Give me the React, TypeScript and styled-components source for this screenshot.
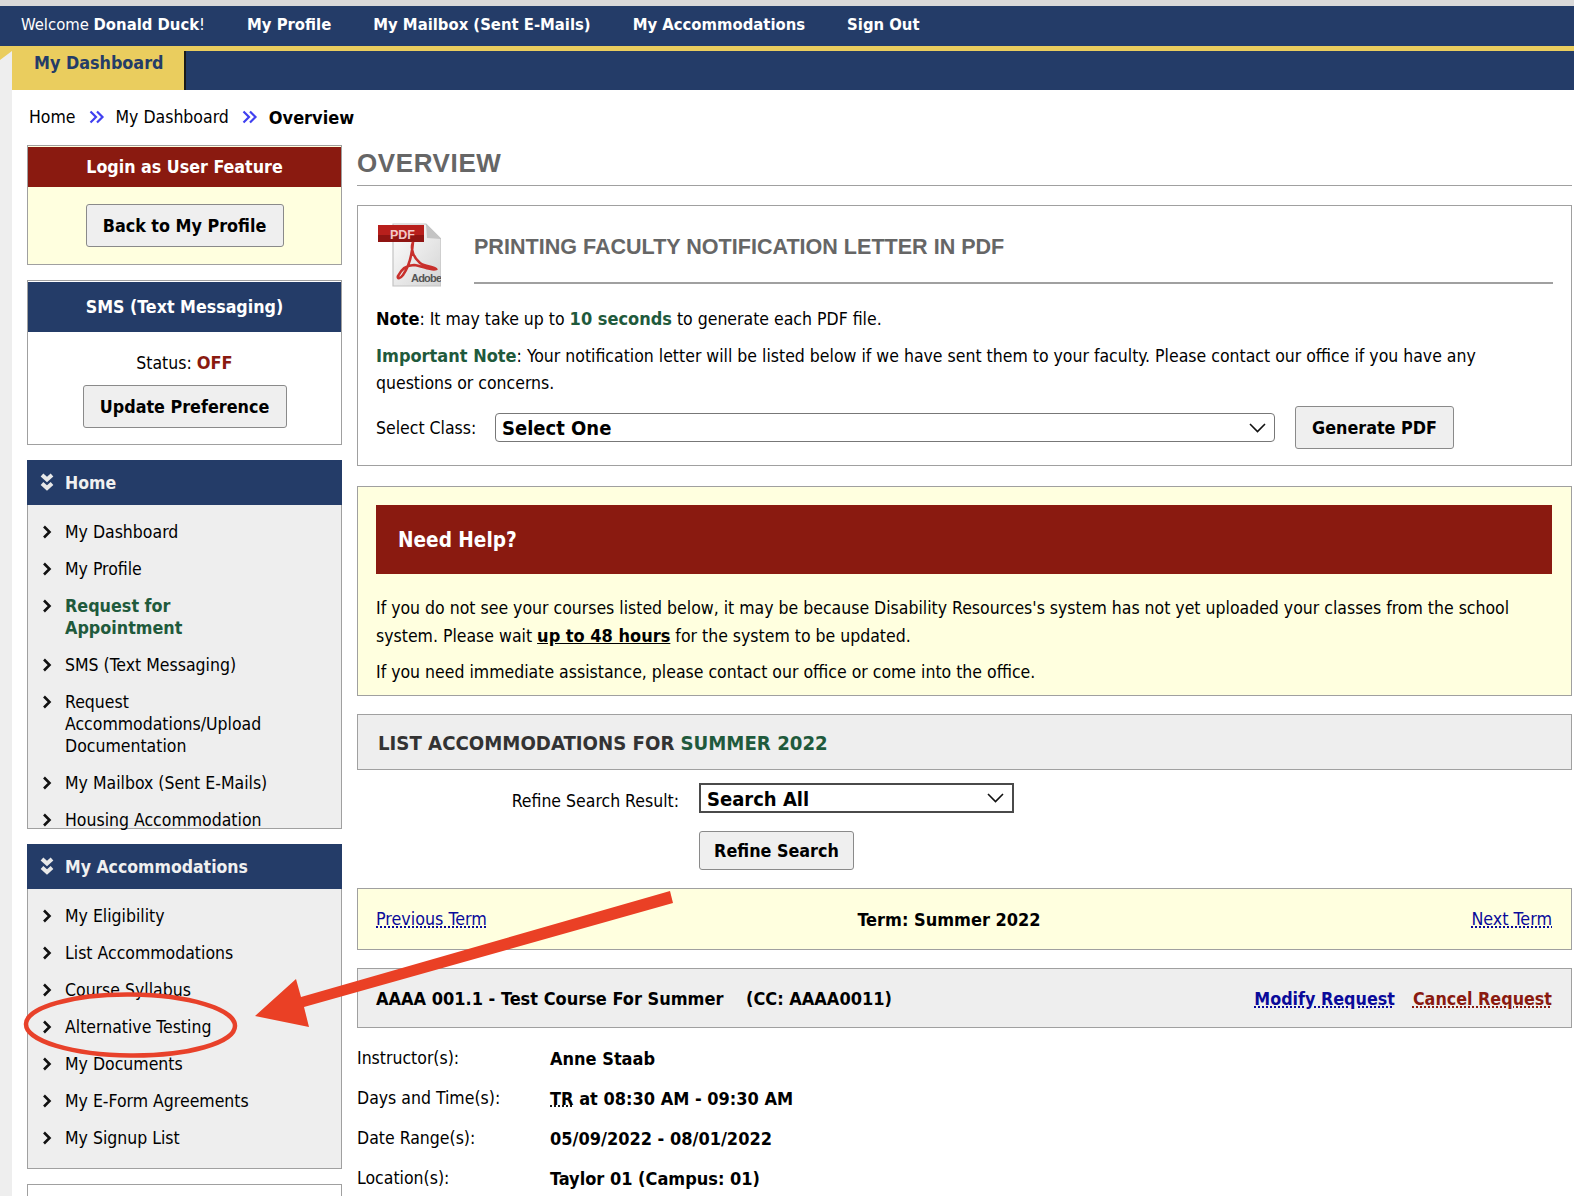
import React from "react";
import styled, { createGlobalStyle } from "styled-components";

const Global = createGlobalStyle`
  html, body { margin: 0; padding: 0; background: #fff; }
  body { font-family: "DejaVu Sans Condensed", "DejaVu Sans", sans-serif; font-stretch: condensed; font-size: 17.5px; color: #000; }
  * { box-sizing: border-box; }
  b { font-size: 18px; }
`;

const Page = styled.div`
  position: relative;
  width: 1574px;
  height: 1196px;
  overflow: hidden;
  border-top: 6px solid #d9d9d9;
`;
const TopNav = styled.nav`
  height: 40px;
  background: #243c68;
  display: flex;
  align-items: center;
  padding: 0 0 3px 21px;
  gap: 42px;
  color: #fff;
  font-size: 16.5px;
  white-space: nowrap;
  b { font-size: 16.5px; }
`;
const NavItem = styled.span`font-weight: bold;`;
const Welcome = styled.span``;
const SubNav = styled.div`
  height: 44px;
  border-top: 5px solid #eacd5e;
  background: #243c68;
  display: flex;
  position: relative;
`;
const Corner = styled.div`
  width: 12px;
  background: #eeeeee;
  position: relative;
  &::before {
    content: "";
    position: absolute;
    left: 0;
    top: 0;
    border-top: 9px solid #eacd5e;
    border-right: 12px solid transparent;
  }
`;
const Tab = styled.div`
  width: 174px;
  background: #eacd5e;
  border-right: 2px solid #1a1a1a;
  color: #243c68;
  font-weight: bold;
  font-size: 17.8px;
  padding: 1px 0 0 22px;
  line-height: 22px;
`;
const Body = styled.div`
  border-left: 12px solid #eeeeee;
  padding-left: 15px;
  height: 1106px;
`;
const Crumbs = styled.div`
  height: 55px;
  display: flex;
  align-items: center;
  padding: 0 0 1px 2px;
`;
const CrumbText = styled.span<{ $strong?: boolean }>`
  font-weight: ${(p) => (p.$strong ? "bold" : "normal")};
  font-size: ${(p) => (p.$strong ? "18px" : "17.5px")};
`;
const CrumbSep = styled.svg`
  width: 16px;
  height: 14px;
  margin: 0 11px 0 13px;
`;
const Columns = styled.div`
  display: flex;
  gap: 15px;
  align-items: flex-start;
`;
const Side = styled.aside`
  width: 315px;
  display: flex;
  flex-direction: column;
  gap: 15px;
  flex: none;
`;
const Main = styled.main`
  width: 1215px;
  flex: none;
`;
const SideBox = styled.section<{ $bg?: string; $h?: number }>`
  border: 1px solid #a0a0a0;
  background: ${(p) => p.$bg || "#fff"};
  ${(p) => (p.$h ? `height: ${p.$h}px;` : "")}
  text-align: center;
`;
const SideHead = styled.div<{ $bg: string; $h: number }>`
  margin: 1px 0 0;
  height: ${(p) => p.$h}px;
  background: ${(p) => p.$bg};
  color: #fff;
  font-weight: bold;
  font-size: 17.7px;
  display: flex;
  align-items: center;
  justify-content: center;
`;
const Btn = styled.div`
  display: inline-flex;
  align-items: center;
  justify-content: center;
  border: 1px solid #8a8a8a;
  border-radius: 3px;
  background: #efefef;
  font-weight: bold;
  font-size: 17.8px;
`;
const BackBtn = styled(Btn)`
  width: 198px;
  height: 43px;
  margin-top: 17px;
`;
const UpdateBtn = styled(Btn)`
  width: 204px;
  height: 43px;
  margin-top: 11px;
`;
const Status = styled.div`
  margin-top: 20px;
  line-height: 22px;
  b { color: #8a1a10; }
`;
const MenuBox = styled.section<{ $h: number }>`
  height: ${(p) => p.$h}px;
  background: #eeeeee;
  border: 1px solid #a0a0a0;
  border-top: none;
`;
const MenuHead = styled.div`
  height: 45px;
  margin: 0 -1px;
  background: #243c68;
  color: #f0f0f0;
  font-weight: bold;
  display: flex;
  align-items: center;
  padding-left: 13px;
  gap: 11px;
`;
const MenuList = styled.ul`
  list-style: none;
  margin: 0;
  padding: 16px 0 0;
`;
const MenuItem = styled.li<{ $green?: boolean }>`
  display: flex;
  align-items: flex-start;
  padding: 0 60px 0 14px;
  gap: 13px;
  margin-bottom: 15px;
  line-height: 22px;
  color: ${(p) => (p.$green ? "#1f5a3c" : "#000")};
  font-weight: ${(p) => (p.$green ? "bold" : "normal")};
  font-size: ${(p) => (p.$green ? "17.8px" : "17.5px")};
  white-space: nowrap;
`;
const ItemText = styled.span`white-space: pre-line;`;
const Chev = styled.svg`
  width: 10px;
  height: 14px;
  margin-top: 4px;
  flex: none;
`;
const Title = styled.h1`
  margin: 0 0 19px;
  height: 41px;
  padding-left: 0;
  font: bold 26px/36px "Liberation Sans", Arial, sans-serif;
  letter-spacing: 0.6px;
  color: #666;
  border-bottom: 1px solid #a0a0a0;
  text-transform: uppercase;
`;
const Panel = styled.section`
  height: 261px;
  border: 1px solid #a0a0a0;
  padding: 16px 18px 0 18px;
  margin-bottom: 20px;
`;
const PdfHead = styled.div`
  display: flex;
  gap: 33px;
  height: 67px;
  margin-bottom: 16px;
`;
const PdfIcon = styled.svg`
  width: 65px;
  height: 67px;
  flex: none;
`;
const PdfTitle = styled.h2`
  flex: 1;
  margin: 0;
  height: 62px;
  padding-top: 12px;
  font: bold 21.55px/26px "Liberation Sans", Arial, sans-serif;
  color: #666;
  border-bottom: 2px solid #a0a0a0;
`;
const Para = styled.p`
  margin: 0 0 9px;
  line-height: 27px;
  b { font-weight: bold; }
`;
const Green = styled.b`color: #1f5a3c;`;
const SelectRow = styled.div`
  display: flex;
  align-items: center;
`;
const SelectLabel = styled.span`width: 119px; flex: none;`;
const SelectWrap = styled.div<{ $w: number; $thick?: boolean }>`
  position: relative;
  width: ${(p) => p.$w}px;
  height: ${(p) => (p.$thick ? 30 : 29)}px;
  border: ${(p) => (p.$thick ? "2px solid #4a4a4a" : "1px solid #777")};
  border-radius: ${(p) => (p.$thick ? 0 : 4)}px;
  display: flex;
  align-items: center;
  padding: 1px 0 0 6px;
  font-size: 20px;
  font-weight: bold;
`;
const SelectArrow = styled.svg`
  position: absolute;
  right: 8px;
  top: 50%;
  margin-top: -5px;
  width: 17px;
  height: 10px;
`;
const GenBtn = styled(Btn)`
  width: 159px;
  height: 43px;
  margin-left: 20px;
`;
const Help = styled.section`
  height: 210px;
  background: #ffffdf;
  border: 1px solid #a0a0a0;
  padding: 18px 19px 0 18px;
  margin-bottom: 18px;
`;
const HelpHead = styled.div`
  height: 69px;
  background: #8a1a10;
  color: #fff;
  font-weight: bold;
  font-size: 20.6px;
  display: flex;
  align-items: center;
  padding-left: 22px;
  margin-bottom: 21px;
`;
const HelpPara = styled.p`
  margin: 0 0 9px;
  line-height: 27px;
  b { text-decoration: underline; }
`;
const ListHead = styled.section`
  height: 56px;
  background: #eeeeee;
  border: 1px solid #a0a0a0;
  display: flex;
  align-items: center;
  padding: 1px 0 0 20px;
  font-size: 20.2px;
  font-weight: bold;
  color: #333;
  span { color: #1f5a3c; margin-left: 6px; }
`;
const Refine = styled.div`
  height: 118px;
  display: grid;
  grid-template-columns: 322px 1fr;
  column-gap: 20px;
  padding-top: 13px;
  align-content: start;
  row-gap: 15px;
`;
const RefineLabel = styled.span`
  text-align: right;
  line-height: 30px;
  padding-top: 3px;
`;
const RefineBtn = styled(Btn)`
  grid-column: 2;
  width: 155px;
  height: 39px;
`;
const TermBar = styled.section`
  height: 62px;
  background: #ffffdf;
  border: 1px solid #a0a0a0;
  display: grid;
  grid-template-columns: 1fr auto 1fr;
  align-items: center;
  padding: 0 19px 0 18px;
  margin-bottom: 18px;
  b { font-weight: bold; margin-right: 30px; }
`;
const DotLink = styled.a<{ $color: string; $bold?: boolean; $right?: boolean }>`
  color: ${(p) => p.$color};
  font-weight: ${(p) => (p.$bold ? "bold" : "normal")};
  font-size: 17.75px;
  text-decoration: underline dotted;
  text-underline-offset: 2px;
  ${(p) => (p.$right ? "justify-self: end;" : "")}
`;
const CourseBar = styled.section`
  height: 60px;
  background: #eeeeee;
  border: 1px solid #a0a0a0;
  display: flex;
  align-items: center;
  padding: 1px 19px 0 18px;
  font-weight: bold;
  font-size: 18px;
  margin-bottom: 10px;
`;
const CourseName = styled.span`
  white-space: pre;
  flex: 1;
`;
const CourseLinks = styled.span`
  display: flex;
  gap: 18px;
`;
const Detail = styled.div`
  display: grid;
  grid-template-columns: 193px 1fr;
  grid-auto-rows: 40px;
  align-items: center;
`;
const DetailValue = styled.span`
  font-weight: bold;
  font-size: 18px;
  abbr { text-decoration: underline dotted; }
`;
const Overlay = styled.svg`
  position: absolute;
  left: 0;
  top: -6px;
  width: 1574px;
  height: 1196px;
  pointer-events: none;
`;

const ChevRight = () => (
  <Chev viewBox="0 0 10 14">
    <path d="M2 1.5 L7.5 7 L2 12.5" fill="none" stroke="#111" strokeWidth="2.6" />
  </Chev>
);
const DoubleDown = () => (
  <svg width="14" height="19" viewBox="0 0 14 19">
    <path d="M2 2 L7 6.5 L12 2 M2 10.5 L7 15 L12 10.5" fill="none" stroke="#e8e8e8" strokeWidth="4" />
  </svg>
);
const Sep = () => (
  <CrumbSep viewBox="0 0 16 14">
    <path d="M1.5 1.5 L7 7 L1.5 12.5 M8 1.5 L13.5 7 L8 12.5" fill="none" stroke="#4040f0" strokeWidth="2.2" />
  </CrumbSep>
);
const Arrow = () => (
  <SelectArrow viewBox="0 0 17 10">
    <path d="M1 1 L8.5 8.5 L16 1" fill="none" stroke="#111" strokeWidth="1.6" />
  </SelectArrow>
);

const home = ["My Dashboard", "My Profile", "Request for Appointment", "SMS (Text Messaging)", "Request\nAccommodations/Upload\nDocumentation", "My Mailbox (Sent E-Mails)", "Housing Accommodation"];
const accom = ["My Eligibility", "List Accommodations", "Course Syllabus", "Alternative Testing", "My Documents", "My E-Form Agreements", "My Signup List"];

export default function App() {
  return (
    <Page>
      <Global />
      <TopNav>
        <Welcome>Welcome <b>Donald Duck</b>!</Welcome>
        <NavItem>My Profile</NavItem>
        <NavItem>My Mailbox (Sent E-Mails)</NavItem>
        <NavItem>My Accommodations</NavItem>
        <NavItem>Sign Out</NavItem>
      </TopNav>
      <SubNav>
        <Corner />
        <Tab>My Dashboard</Tab>
      </SubNav>
      <Body>
        <Crumbs>
          <CrumbText>Home</CrumbText>
          <Sep />
          <CrumbText>My Dashboard</CrumbText>
          <Sep />
          <CrumbText $strong>Overview</CrumbText>
        </Crumbs>
        <Columns>
          <Side>
            <SideBox $bg="#ffffdf" $h={120}>
              <SideHead $bg="#8a1a10" $h={40}>Login as User Feature</SideHead>
              <BackBtn>Back to My Profile</BackBtn>
            </SideBox>
            <SideBox $h={165}>
              <SideHead $bg="#243c68" $h={50}>SMS (Text Messaging)</SideHead>
              <Status>Status: <b>OFF</b></Status>
              <UpdateBtn>Update Preference</UpdateBtn>
            </SideBox>
            <MenuBox $h={369}>
              <MenuHead><DoubleDown />Home</MenuHead>
              <MenuList>
                {home.map((t) => (
                  <MenuItem key={t} $green={t.startsWith("Request for")}>
                    <ChevRight />
                    <ItemText>{t}</ItemText>
                  </MenuItem>
                ))}
              </MenuList>
            </MenuBox>
            <MenuBox $h={325}>
              <MenuHead><DoubleDown />My Accommodations</MenuHead>
              <MenuList>
                {accom.map((t) => (
                  <MenuItem key={t}>
                    <ChevRight />
                    <ItemText>{t}</ItemText>
                  </MenuItem>
                ))}
              </MenuList>
            </MenuBox>
            <SideBox $h={60} />
          </Side>
          <Main>
            <Title>Overview</Title>
            <Panel>
              <PdfHead>
                <PdfIcon viewBox="0 3 65 67">
                  <defs>
                    <linearGradient id="pg" x1="0" y1="0" x2="1" y2="1">
                      <stop offset="0" stopColor="#ffffff" />
                      <stop offset="1" stopColor="#d4d4d4" />
                    </linearGradient>
                  </defs>
                  <path d="M17 5 H50 L65 20 V67 H17 Z" fill="url(#pg)" stroke="#c4c4c4" strokeWidth="1.2" />
                  <path d="M50 5 L51 19 L65 20 Z" fill="#c4c4c4" />
                  <rect x="2" y="6" width="46" height="17" fill="#b81f1c" />
                  <rect x="2" y="16" width="46" height="7" fill="#8f1412" />
                  <text x="14" y="19.5" fontFamily="Liberation Sans" fontWeight="bold" fontSize="12.5" fill="#f2c8c8">PDF</text>
                  <path d="M37 23 C34 31 38 39 44 44 C49 48 58 47 60 50 C56 52 46 47 38 46 C30 46 25 51 22 57 C21 60 24 60 27 56 C32 49 36 36 37 23 Z" fill="none" stroke="#c8302c" strokeWidth="2.6" />
                  <text x="35" y="63" fontFamily="Liberation Sans" fontWeight="bold" fontSize="11" fill="#555" letterSpacing="-0.8">Adobe</text>
                </PdfIcon>
                <PdfTitle>PRINTING FACULTY NOTIFICATION LETTER IN PDF</PdfTitle>
              </PdfHead>
              <Para><b>Note</b>: It may take up to <Green>10 seconds</Green> to generate each PDF file.</Para>
              <Para><Green>Important Note</Green>: Your notification letter will be listed below if we have sent them to your faculty. Please contact our office if you have any questions or concerns.</Para>
              <SelectRow>
                <SelectLabel>Select Class:</SelectLabel>
                <SelectWrap $w={780}>Select One<Arrow /></SelectWrap>
                <GenBtn>Generate PDF</GenBtn>
              </SelectRow>
            </Panel>
            <Help>
              <HelpHead>Need Help?</HelpHead>
              <HelpPara>If you do not see your courses listed below, it may be because Disability Resources's system has not yet uploaded your classes from the school system. Please wait <b>up to 48 hours</b> for the system to be updated.</HelpPara>
              <HelpPara>If you need immediate assistance, please contact our office or come into the office.</HelpPara>
            </Help>
            <ListHead>LIST ACCOMMODATIONS FOR<span>SUMMER 2022</span></ListHead>
            <Refine>
              <RefineLabel>Refine Search Result:</RefineLabel>
              <SelectWrap $w={315} $thick>Search All<Arrow /></SelectWrap>
              <RefineBtn>Refine Search</RefineBtn>
            </Refine>
            <TermBar>
              <DotLink $color="#0a0a9a">Previous Term</DotLink>
              <b>Term: Summer 2022</b>
              <DotLink $color="#0a0a9a" $right>Next Term</DotLink>
            </TermBar>
            <CourseBar>
              <CourseName>{"AAAA 001.1 - Test Course For Summer    (CC: AAAA0011)"}</CourseName>
              <CourseLinks>
                <DotLink $color="#0a0a9a" $bold>Modify Request</DotLink>
                <DotLink $color="#8a1a10" $bold>Cancel Request</DotLink>
              </CourseLinks>
            </CourseBar>
            <Detail>
              <span>Instructor(s):</span><DetailValue>Anne Staab</DetailValue>
              <span>Days and Time(s):</span><DetailValue><abbr>TR</abbr> at 08:30 AM - 09:30 AM</DetailValue>
              <span>Date Range(s):</span><DetailValue>05/09/2022 - 08/01/2022</DetailValue>
              <span>Location(s):</span><DetailValue>Taylor 01 (Campus: 01)</DetailValue>
            </Detail>
          </Main>
        </Columns>
      </Body>
      <Overlay viewBox="0 0 1574 1196">
        <ellipse cx="130.5" cy="1025" rx="104.5" ry="30.5" fill="none" stroke="#e8412a" strokeWidth="4.5" transform="rotate(0.5 130 1025)" />
        <path d="M670 891 L673 903 L304 1007 L309 1027 L255 1016 L296 979 L301 997 Z" fill="#ea4025" />
      </Overlay>
    </Page>
  );
}
